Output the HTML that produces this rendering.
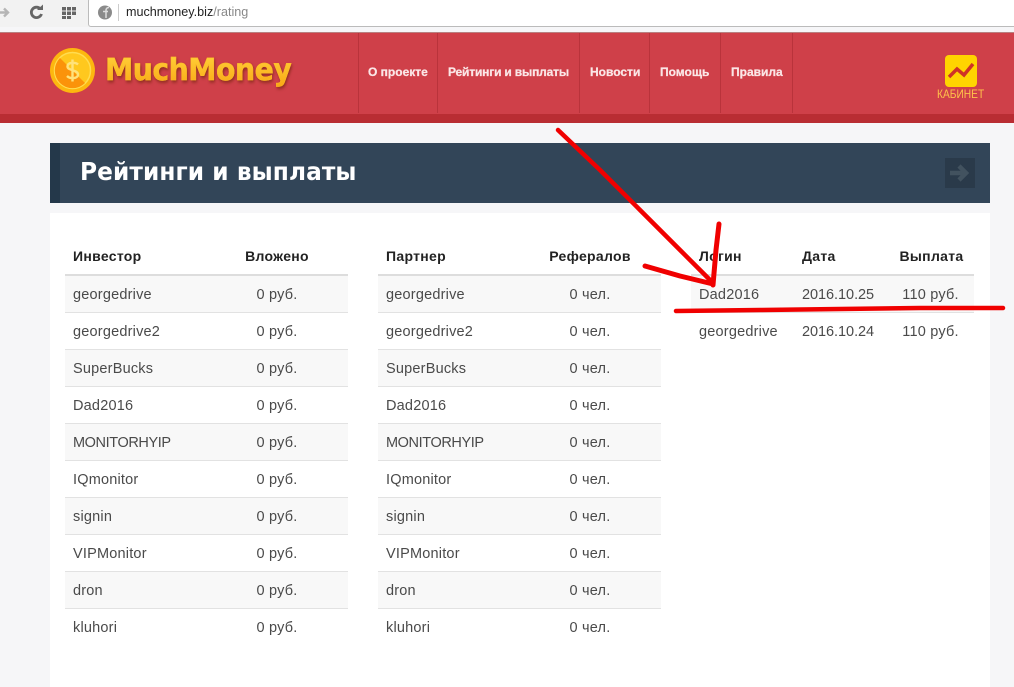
<!DOCTYPE html>
<html><head><meta charset="utf-8"><style>
html,body{margin:0;padding:0}
body{width:1014px;height:687px;position:relative;overflow:hidden;background:#f6f6f8;font-family:"Liberation Sans",sans-serif;color:#4a4a4a}
.a{position:absolute}
table{position:absolute;top:237px;width:283px;border-collapse:collapse;table-layout:fixed;font-size:14.5px;letter-spacing:.2px}
th{height:37px;padding:0;font-size:14px;color:#222;font-weight:bold;border-bottom:2px solid #ddd;letter-spacing:.3px}
td{height:34px;padding:2px 0 0;border-bottom:1px solid #e2e2e2;text-align:center}
tr:nth-child(even) td{background:#f8f8f8}
tr:last-child td{border-bottom:0;background:#fff}
th:first-child,td:first-child{text-align:left;padding-left:8px}
#t3 th:last-child{padding-right:5px}
#t3 td:last-child{padding-right:7px}
.m{letter-spacing:-.4px}
.d{text-align:left!important;letter-spacing:-.05px}
.n{top:65px;font:bold 12px "Liberation Sans",sans-serif;color:#fbe6e6;white-space:nowrap;-webkit-text-stroke:.25px #fbe6e6}
.v{top:33px;width:1px;height:80px;background:#b9333b}
</style></head><body>
<div class="a" style="left:0;top:0;width:1014px;height:27px;background:#f2f2f2"></div>
<div class="a" style="left:88px;top:-2px;width:930px;height:27px;background:#fff;border:1px solid #bbb;border-radius:3px"></div>
<svg class="a" style="left:0;top:0" width="120" height="27">
<path d="M0 12.500h7M4 8.500l4 4-4 4" fill="none" stroke="#b5b5b5" stroke-width="2.400"/>
<path d="M40.500 9a5.200 5.200 0 1 0 1 5" fill="none" stroke="#666" stroke-width="2.800"/><path d="M37 10h6V4.500z" fill="#666"/>
<path d="M62 7h4v3.500h-4zM67 7h4v3.500h-4zM72 7h4v3.500h-4zM62 11.500h4v3.500h-4zM67 11.500h4v3.500h-4zM72 11.500h4v3.500h-4zM62 16h4v3h-4zM67 16h4v3h-4z" fill="#666"/>
<circle cx="105" cy="12.500" r="7" fill="#8a8a8a"/><path d="M106 18v-7.500q0-3 3-3M103 11.500h5" fill="none" stroke="#ddd" stroke-width="1.500"/>
<path d="M118.500 4v17" stroke="#ccc"/>
</svg>
<div class="a" style="left:126px;top:5px;font-size:12.600px;color:#222;white-space:nowrap">muchmoney.biz<span style="color:#888">/rating</span></div>

<div class="a" style="left:0;top:32px;width:1014px;height:82px;background:#cf4049;border-top:1px solid #b98080;box-sizing:border-box"></div>
<div class="a" style="left:0;top:114px;width:1014px;height:9px;background:#b92d33"></div>
<div class="a v" style="left:358px"></div><div class="a v" style="left:437px"></div><div class="a v" style="left:579px"></div><div class="a v" style="left:649px"></div><div class="a v" style="left:720px"></div><div class="a v" style="left:792px"></div>
<svg class="a" style="left:50px;top:48px" width="46" height="46">
<circle cx="22.500" cy="22.500" r="22.500" fill="#fdb70f"/><circle cx="22.500" cy="22.500" r="18" fill="#ffc81e" stroke="#ffdc50" stroke-width="1.500"/>
<path d="M10 10L35 35A17.500 17.500 0 0 1 10 10z" fill="#fb930a"/>
<path d="M28 16.500c-2.500-2.500-10.500-2.500-10.500 2 0 4.500 10.500 3 10.500 8 0 4.500-8 4.500-11 1.500M22.500 11.500v22" fill="none" stroke="#ffe27a" stroke-width="2.400"/>
</svg>
<div class="a" style="left:105px;top:53px;font:bold 30px 'DejaVu Sans',sans-serif;letter-spacing:-.55px;white-space:nowrap;transform-origin:left top;transform:scaleX(.945);filter:drop-shadow(1px 2px 1.500px #8f2d20)"><span style="background:linear-gradient(#ffd23a,#f9a614);-webkit-background-clip:text;background-clip:text;color:transparent;-webkit-text-stroke:.4px #fdb926">MuchMoney</span></div>
<div class="a n" style="left:368px">О проекте</div>
<div class="a n" style="left:448px;letter-spacing:-.17px">Рейтинги и выплаты</div>
<div class="a n" style="left:590px">Новости</div>
<div class="a n" style="left:660px">Помощь</div>
<div class="a n" style="left:731px">Правила</div>
<svg class="a" style="left:945px;top:55px" width="32" height="32"><rect width="32" height="32" rx="4" fill="#ffd400"/><path d="M4 22l8-8 7 6 9-11" fill="none" stroke="#cf3226" stroke-width="3.500"/></svg>
<div class="a" style="left:937px;top:87px;font-size:12px;color:#ffc24a;white-space:nowrap;transform-origin:left top;transform:scaleX(.85)">КАБИНЕТ</div>

<div class="a" style="left:50px;top:143px;width:940px;height:60px;background:#324558"></div>
<div class="a" style="left:50px;top:143px;width:10px;height:60px;background:#24384a"></div>
<div class="a" style="left:80px;top:157px;font:bold 25px 'DejaVu Sans',sans-serif;color:#fff;white-space:nowrap;letter-spacing:.1px;transform-origin:left top;transform:scaleX(.93)">Рейтинги и выплаты</div>
<div class="a" style="left:945px;top:158px;width:30px;height:30px;background:#2a3a4a"></div>
<svg class="a" style="left:945px;top:158px" width="30" height="30"><path d="M5 15h16M14 8l7 7-7 7" fill="none" stroke="#42525f" stroke-width="4.500"/></svg>
<div class="a" style="left:50px;top:213px;width:940px;height:474px;background:#fff"></div>

<table style="left:65px"><colgroup><col style="width:141px"><col></colgroup>
<tr><th>Инвестор</th><th>Вложено</th></tr>
<tr><td>georgedrive</td><td>0 руб.</td></tr>
<tr><td>georgedrive2</td><td>0 руб.</td></tr>
<tr><td>SuperBucks</td><td>0 руб.</td></tr>
<tr><td>Dad2016</td><td>0 руб.</td></tr>
<tr><td><span class="m">MONITORHYIP</span></td><td>0 руб.</td></tr>
<tr><td>IQmonitor</td><td>0 руб.</td></tr>
<tr><td>signin</td><td>0 руб.</td></tr>
<tr><td>VIPMonitor</td><td>0 руб.</td></tr>
<tr><td>dron</td><td>0 руб.</td></tr>
<tr><td>kluhori</td><td>0 руб.</td></tr>
</table>
<table style="left:378px"><colgroup><col style="width:141px"><col></colgroup>
<tr><th>Партнер</th><th>Рефералов</th></tr>
<tr><td>georgedrive</td><td>0 чел.</td></tr>
<tr><td>georgedrive2</td><td>0 чел.</td></tr>
<tr><td>SuperBucks</td><td>0 чел.</td></tr>
<tr><td>Dad2016</td><td>0 чел.</td></tr>
<tr><td><span class="m">MONITORHYIP</span></td><td>0 чел.</td></tr>
<tr><td>IQmonitor</td><td>0 чел.</td></tr>
<tr><td>signin</td><td>0 чел.</td></tr>
<tr><td>VIPMonitor</td><td>0 чел.</td></tr>
<tr><td>dron</td><td>0 чел.</td></tr>
<tr><td>kluhori</td><td>0 чел.</td></tr>
</table>
<table id="t3" style="left:691px"><colgroup><col style="width:111px"><col style="width:92px"><col></colgroup>
<tr><th>Логин</th><th style="text-align:left">Дата</th><th>Выплата</th></tr>
<tr><td>Dad2016</td><td class="d">2016.10.25</td><td>110 руб.</td></tr>
<tr><td style="border:0;background:#fff">georgedrive</td><td class="d" style="border:0;background:#fff">2016.10.24</td><td style="border:0;background:#fff">110 руб.</td></tr>
</table>

<svg class="a" style="left:0;top:0" width="1014" height="687">
<g fill="none" stroke="#f00000" stroke-linecap="round" stroke-linejoin="round">
<path d="M558 130L600 170 640 210 680 250 713 283" stroke-width="4.500"/>
<path d="M719 224L716 250 713 285" stroke-width="5"/>
<path d="M645 266L680 276 713 284" stroke-width="5"/>
<path d="M676 311L760 310 840 309 920 308 1003 308" stroke-width="4.500"/>
</g></svg>
</body></html>
